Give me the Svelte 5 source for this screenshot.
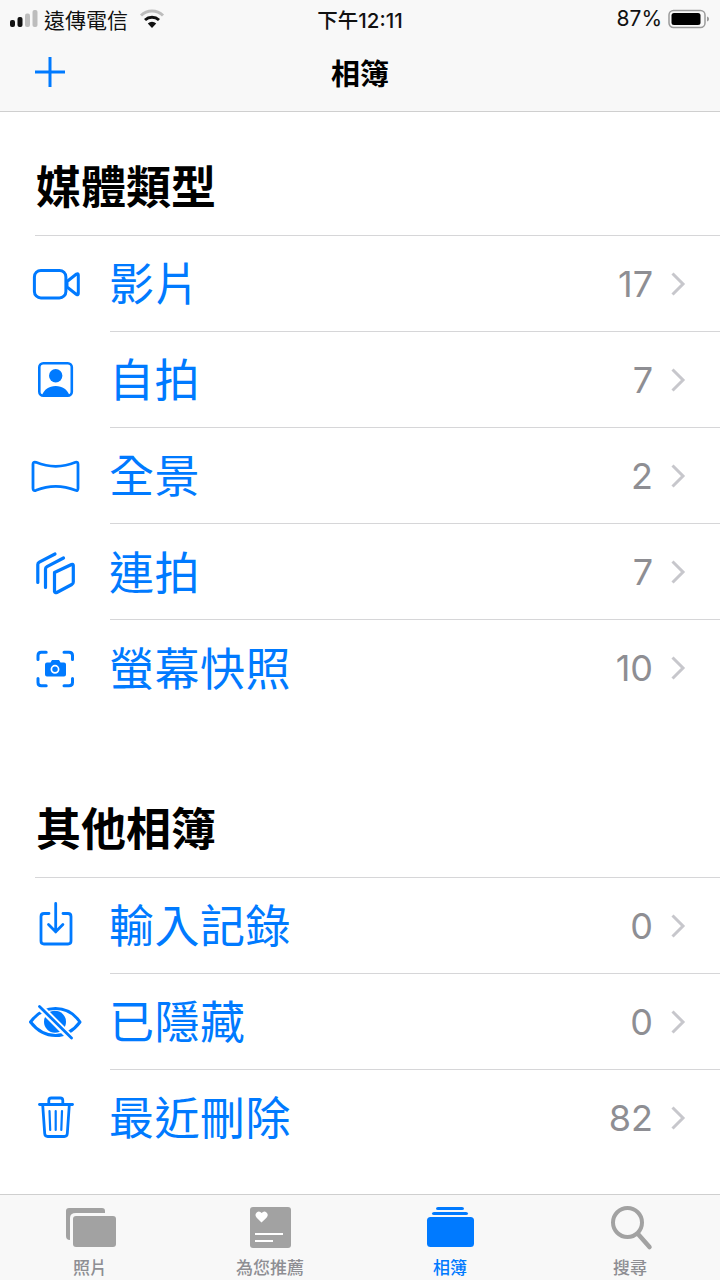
<script>
  // Albums screen: two grouped lists plus the tab bar. Icons are all drawn on a 60x60 canvas.
  const mediaTypes = [
    { name: "影片", count: 17, icon: "video" },
    { name: "自拍", count: 7, icon: "selfie" },
    { name: "全景", count: 2, icon: "pano" },
    { name: "連拍", count: 7, icon: "burst" },
    { name: "螢幕快照", count: 10, icon: "shot" },
  ];
  const others = [
    { name: "輸入記錄", count: 0, icon: "import" },
    { name: "已隱藏", count: 0, icon: "hidden" },
    { name: "最近刪除", count: 82, icon: "trash" },
  ];
  const sections = [
    { title: "媒體類型", rows: mediaTypes },
    { title: "其他相簿", rows: others },
  ];
  const tabs = [
    { label: "照片", icon: "photos" },
    { label: "為您推薦", icon: "foryou" },
    { label: "相簿", icon: "albums", active: true },
    { label: "搜尋", icon: "search" },
  ];
</script>

<div class="page">
  <header class="top">
    <div class="status">
      <div class="left">
        <svg class="signal" width="29" height="18" viewBox="0 0 29 18">
          <rect x="0" y="10" width="5" height="7" rx="2" fill="#111" />
          <rect x="7.500" y="7" width="5" height="10" rx="2" fill="#111" />
          <rect x="15" y="3.500" width="5" height="13.500" rx="2" fill="#bdbdbd" />
          <rect x="22.500" y="0" width="5" height="17" rx="2" fill="#bdbdbd" />
        </svg>
        <span class="carrier">遠傳電信</span>
        <svg class="wifi" width="26" height="20" viewBox="0 0 26 20">
          <path d="M2 6.500a16 16 0 0 1 22 0" fill="none" stroke="#bdbdbd" stroke-width="3" />
          <path d="M6 11a10.500 10.500 0 0 1 14 0" fill="none" stroke="#111" stroke-width="3" />
          <path d="M13 19l-4.200-4.600a6 6 0 0 1 8.400 0z" fill="#111" />
        </svg>
      </div>
      <span class="time">下午12:11</span>
      <div class="right">
        <span>87%</span>
        <svg width="42" height="20" viewBox="0 0 42 20">
          <rect x="1" y="1.500" width="36" height="17" rx="4.500" fill="none" stroke="#9a9a9a" stroke-width="1.500" />
          <rect x="3.500" y="4" width="29" height="12" rx="2.500" fill="#000" />
          <path d="M39 7.500c1.500.5 2 1.500 2 2.500s-.5 2-2 2.500z" fill="#9a9a9a" />
        </svg>
      </div>
    </div>
    <nav class="bar">
      <svg class="plus" width="32" height="32" viewBox="0 0 32 32">
        <path d="M16 1v30M1 16h30" stroke="#007aff" stroke-width="3" fill="none" />
      </svg>
      <h1>相簿</h1>
    </nav>
  </header>

  <main>
    {#each sections as section}
      <section>
        <h2>{section.title}</h2>
        <ul>
          {#each section.rows as row}
            <li>
              <svg class="icon" width="60" height="60" viewBox="0 0 60 60">
                {@render rowIcon(row.icon)}
              </svg>
              <div class="line">
                <span class="name">{row.name}</span>
                <span class="count">{row.count}</span>
                <svg class="chev" width="16" height="26" viewBox="0 0 16 26">
                  <path d="M2.500 2.500L13 13 2.500 23.500" fill="none" stroke="#c7c7cc" stroke-width="3" />
                </svg>
              </div>
            </li>
          {/each}
        </ul>
      </section>
    {/each}
  </main>

  <footer class="tabs">
    {#each tabs as tab}
      <div class="tab" class:active={tab.active}>
        <svg width="60" height="50" viewBox="0 0 60 50">
          {@render tabIcon(tab.icon)}
        </svg>
        <span>{tab.label}</span>
      </div>
    {/each}
  </footer>
</div>

{#snippet rowIcon(kind)}
  {#if kind === "video"}
    <g fill="none" stroke="#007aff" stroke-width="3" stroke-linejoin="round">
      <rect x="8.400" y="16.400" width="31.500" height="27.500" rx="6.500" />
      <path d="M41 27.500l9.500-7.500q1.800-1 1.800 1v18.500q0 2-1.800 1L41 33z" />
    </g>
  {:else if kind === "selfie"}
    <rect x="13.300" y="14.300" width="32.500" height="32.500" rx="4" fill="none" stroke="#007aff" stroke-width="2.600" />
    <circle cx="29.700" cy="26.700" r="6.700" fill="#007aff" />
    <path d="M16 46.500c2-6 7-9.500 13.700-9.500s11.700 3.500 13.700 9.500z" fill="#007aff" />
  {:else if kind === "pano"}
    <path d="M10 17.300q19.700 8 39.500 0q2.500-1 2.500 2v24q0 3-2.500 2q-19.800-8-39.500 0q-3 1-3-2v-24q0-3 3-2z" fill="none" stroke="#007aff" stroke-width="2.800" stroke-linejoin="round" />
  {:else if kind === "burst"}
    <g fill="none" stroke="#007aff" stroke-width="3.200" stroke-linecap="round" stroke-linejoin="round">
      <path d="M28.500 30.500l17-8q1.800-.8 1.800 1V40q0 1.800-1.500 2.500l-15 8q-1.800.8-2.300-1z" />
      <path d="M19.500 45.500V27q0-1.500 1.500-2.300L37.500 16" />
      <path d="M11.800 40.500V22.500q0-1.500 1.500-2.300L29 12" />
    </g>
  {:else if kind === "shot"}
    <path d="M12 21.500v-4q0-3.200 3.200-3.200h5M38 14.300h5q3.500 0 3.500 3.200v4M12 40.500v4q0 3.200 3.200 3.200h5M38 47.700h5q3.500 0 3.500-3.200v-4" fill="none" stroke="#007aff" stroke-width="3" stroke-linecap="round" />
    <path d="M21 24.500h3.500l1.500-2.500h7l1.500 2.500h3.500q2 0 2 2v10q0 2-2 2H21q-2 0-2-2v-10q0-2 2-2z" fill="#007aff" />
    <circle cx="29" cy="31.300" r="3.600" fill="none" stroke="#fff" stroke-width="1.700" />
  {:else if kind === "import"}
    <g fill="none" stroke="#007aff" stroke-width="2.800" stroke-linecap="round" stroke-linejoin="round">
      <path d="M23 17.500h-5q-3 0-3 3V45q0 3 3 3h24q3 0 3-3V20.500q0-3-3-3h-5" />
      <path d="M29.700 7.500V36M22.500 28.500l7.200 7.200 7.200-7.200" />
    </g>
  {:else if kind === "hidden"}
    <path d="M4.500 31q10-13.500 25-13.500T54 31q-10 13.500-24.500 13.500T4.500 31z" fill="none" stroke="#007aff" stroke-width="3" stroke-linejoin="round" />
    <circle cx="29" cy="30.700" r="11" fill="#007aff" />
    <path d="M14 16l31 31" stroke="#fff" stroke-width="7" />
    <path d="M13.500 15.500l32 31.500" stroke="#007aff" stroke-width="2.800" stroke-linecap="round" />
  {:else if kind === "trash"}
    <g fill="none" stroke="#007aff" stroke-width="2.800" stroke-linecap="round" stroke-linejoin="round">
      <path d="M13.500 17.500h33" />
      <path d="M22.800 17v-3.500q0-2.500 2.500-2.500h9q2.500 0 2.500 2.500V17" />
      <path d="M16.700 18l2 28.500q.2 3 3 3h16.600q2.800 0 3-3l2-28.500" />
      <path d="M23.500 24l.7 19M29.700 24v19M36 24l-.7 19" stroke-width="2.200" />
    </g>
  {/if}
{/snippet}

{#snippet tabIcon(kind)}
  {#if kind === "photos"}
    <path d="M6 30V5q0-3 3-3h33q3 0 3 3v2H16q-6 0-6 5v22q-4 0-4-4z" fill="#a2a2a2" />
    <rect x="13" y="10" width="43" height="31" rx="3" fill="#a2a2a2" />
  {:else if kind === "foryou"}
    <rect x="10" y="1" width="41" height="41" rx="3" fill="#a2a2a2" />
    <path d="M21.500 16.500l-4.800-4.700q-2.500-3 0-5.300t5 .5q2.300-2.800 4.800-.5t0 5.300z" fill="#fff" />
    <path d="M15 28h28M15 35h18" stroke="#fff" stroke-width="2.200" />
  {:else if kind === "albums"}
    <path d="M18 1h24q2 0 2 1.500T42 4H18q-2 0-2-1.500T18 1z" fill="#007aff" />
    <path d="M14 6h32q2 0 2 1.500T46 9H14q-2 0-2-1.500T14 6z" fill="#007aff" />
    <rect x="7" y="11" width="47" height="30" rx="3.500" fill="#007aff" />
  {:else if kind === "search"}
    <circle cx="27.500" cy="16.500" r="14.500" fill="none" stroke="#a2a2a2" stroke-width="4" />
    <path d="M38 28l11.500 13" stroke="#a2a2a2" stroke-width="4.500" stroke-linecap="round" />
  {/if}
{/snippet}

<style>
  :global(body) {
    margin: 0;
    background: #fff;
  }
  .page {
    width: 720px;
    height: 1280px;
    display: flex;
    flex-direction: column;
    overflow: hidden;
    font-family: Inter, "Noto Sans CJK TC", sans-serif;
  }
  .top {
    background: #f8f8f8;
    border-bottom: 1px solid #cfcfcf;
    box-sizing: border-box;
    height: 112px;
    flex: none;
  }
  .status {
    height: 37px;
    padding: 0 10px 0 10px;
    display: grid;
    grid-template-columns: 1fr auto 1fr;
    align-items: center;
    font-size: 21px;
    color: #111;
  }
  .left {
    display: flex;
    align-items: center;
  }
  .signal { margin-right: 5px; }
  .wifi { margin-left: 11px; }
  .time {
    font-size: 20.500px;
    font-weight: 500;
  }
  .right {
    display: flex;
    align-items: center;
    justify-content: flex-end;
    gap: 6px;
  }
  .bar {
    height: 70px;
    display: flex;
    align-items: center;
    justify-content: center;
    position: relative;
  }
  .plus {
    position: absolute;
    left: 34px;
    top: 19px;
  }
  h1 {
    margin: 0;
    font-size: 29px;
    font-weight: 600;
    color: #000;
  }
  main {
    flex: 1;
    min-height: 0;
  }
  section { margin-bottom: 80px; }
  section:first-child { padding-top: 42px; }
  section:last-child { margin-bottom: 0; }
  h2 {
    margin: 0 0 0 36px;
    height: 81px;
    font-size: 45px;
    line-height: 68px;
    font-weight: 700;
    color: #000;
  }
  ul {
    list-style: none;
    margin: 0 0 0 35px;
    padding: 0;
    border-top: 1px solid #d6d6d8;
  }
  li {
    margin-left: -35px;
    height: 96.200px;
    display: flex;
    align-items: center;
  }
  li:first-child { height: 95.200px; }
  .icon {
    flex: none;
    margin-left: 26px;
    margin-right: 24px;
  }
  .line {
    flex: 1;
    height: 100%;
    display: flex;
    align-items: center;
    padding-right: 34px;
    gap: 17px;
  }
  li + li .line { border-top: 1px solid #d6d6d8; }
  .name {
    flex: 1;
    margin-left: -1px;
    padding-top: 2px;
    font-size: 45px;
    letter-spacing: 0.500px;
    line-height: 1;
    color: #007aff;
  }
  .count {
    font-size: 36px;
    color: #8e8e93;
    line-height: 1;
  }
  .tabs {
    flex: none;
    height: 86px;
    box-sizing: border-box;
    border-top: 1px solid #cfcfcf;
    background: #f8f8f8;
    display: grid;
    grid-template-columns: repeat(4, 1fr);
  }
  .tab {
    display: flex;
    flex-direction: column;
    align-items: center;
    padding-top: 11px;
    color: #8e8e93;
    font-size: 17px;
    line-height: 22px;
    font-weight: 500;
  }
  .tab svg { margin-bottom: 1px; }
  .tab.active { color: #007aff; }
</style>
